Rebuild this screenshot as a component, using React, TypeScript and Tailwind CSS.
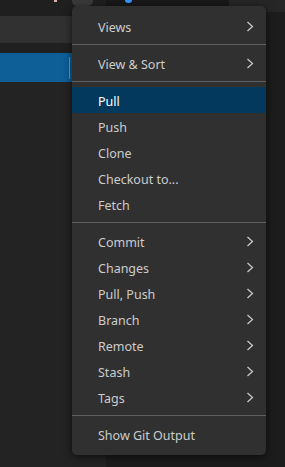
import { useState } from "react"

type MenuEntry = { label: string; sub?: boolean } | "sep"

const MENU: MenuEntry[] = [
    { label: "Views", sub: true },
    "sep",
    { label: "View & Sort", sub: true },
    "sep",
    { label: "Pull" },
    { label: "Push" },
    { label: "Clone" },
    { label: "Checkout to..." },
    { label: "Fetch" },
    "sep",
    { label: "Commit", sub: true },
    { label: "Changes", sub: true },
    { label: "Pull, Push", sub: true },
    { label: "Branch", sub: true },
    { label: "Remote", sub: true },
    { label: "Stash", sub: true },
    { label: "Tags", sub: true },
    "sep",
    { label: "Show Git Output" },
]

function Chevron() {
    return (
        <svg width="8" height="11" viewBox="0 0 8 11" fill="none">
            <path d="M1.5 1L6.5 5.5L1.5 10" stroke="#cccccc" strokeWidth="1.2" />
        </svg>
    )
}

function GitMenu() {
    const [active, setActive] = useState("Pull")

    return (
        <div className="absolute left-[72px] top-[6px] w-[194px] rounded-[5px] bg-[#303031] pt-[7px] pb-[8px] shadow-[0_2px_8px_rgba(0,0,0,0.6)]">
            {MENU.map((item, i) =>
                item === "sep" ? (
                    <div key={i} className="h-[11px] pt-[5px]">
                        <div className="h-px bg-[#606060]" />
                    </div>
                ) : (
                    <div key={i}
                        onMouseEnter={() => setActive(item.label)}
                        className={`flex h-[26px] items-center justify-between pl-[26px] pr-[12px] text-[12.5px] cursor-default ${active === item.label ? "bg-[#04395e] text-white" : "text-[#cccccc]"}`}>
                        <span className="pt-[4px]">{item.label}</span>
                        {item.sub && <Chevron />}
                    </div>
                )
            )}
        </div>
    )
}

export default function App() {
    return (
        <div className="relative flex h-[467px] w-[285px] overflow-hidden bg-[#1c1c1c] font-['Noto_Sans',sans-serif]">
            <div className="flex w-[106px] flex-col bg-[#232323]">
                <div className="flex h-[16px] bg-[#1f1f1f]">
                    <div className="ml-[54px] h-[2px] w-[3px] bg-[#d8b0b0]" />
                    <div className="ml-[15px] h-[6px] w-[21px] rounded-b-[5px] bg-[#3a3a3a]" />
                </div>
                <div className="h-[27px] bg-[#313131]" />
                <div className="h-[10px] bg-[#202020]" />
                <div className="flex h-[29px] bg-[#0e5e98] pt-[4px]">
                    <div className="ml-[69px] h-[22px] w-px bg-[#6a9cca]" />
                </div>
            </div>
            <div className="flex flex-1 flex-col">
                <div className="flex h-[12px]">
                    <div className="w-[123px] bg-[#181818]">
                        <div className="ml-[19px] h-[3px] w-[7px] rounded-b-[3px] bg-[#3794ff]" />
                    </div>
                    <div className="flex-1 bg-[#262626]" />
                </div>
            </div>
            <GitMenu />
        </div>
    )
}
